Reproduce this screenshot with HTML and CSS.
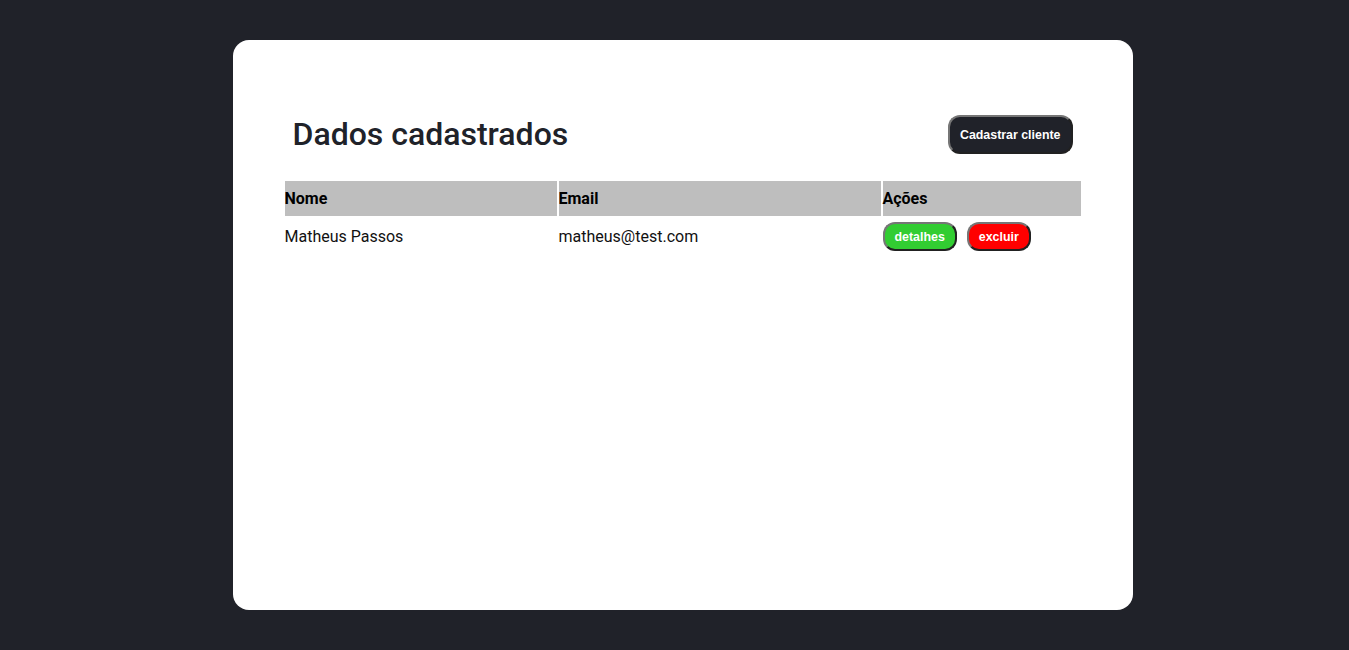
FILE: index.html
```html
<!DOCTYPE html>
<html lang="pt-BR">
<head>
<meta charset="utf-8">
<title>Dados cadastrados</title>
<link rel="stylesheet" href="styles.css">
</head>
<body>
<main class="card">
  <header class="card-header">
    <h1 class="title">Dados cadastrados</h1>
    <button class="btn btn-dark">Cadastrar cliente</button>
  </header>
  <div class="table">
    <div class="th">Nome</div>
    <div class="th">Email</div>
    <div class="th">Ações</div>
    <div class="td">Matheus Passos</div>
    <div class="td">matheus@test.com</div>
    <div class="td actions">
      <button class="btn btn-small btn-green">detalhes</button>
      <button class="btn btn-small btn-red">excluir</button>
    </div>
  </div>
</main>
</body>
</html>
```
FILE: styles.css
```css
html, body {
  margin: 0;
  padding: 0;
  background: #202229;
}
body {
  font-family: Roboto, "Liberation Sans", sans-serif;
  padding: 40px 0 0 16px;
  height: 650px;
  box-sizing: border-box;
}
.card {
  width: 900px;
  height: 570px;
  margin: 0 auto;
  background: #ffffff;
  border-radius: 16px;
  box-sizing: border-box;
  padding: 75px 52px 0;
}
.card-header {
  display: flex;
  align-items: center;
  justify-content: space-between;
  padding: 0 8px;
  height: 39px;
}
.title {
  margin: 0;
  font-size: 32px;
  font-weight: 500;
  color: #202229;
  line-height: 37px;
}
.btn {
  font-family: "Liberation Sans", Arial, sans-serif;
  font-weight: bold;
  color: #ffffff;
  border: 2px outset #767676;
  cursor: pointer;
  box-sizing: border-box;
}
.btn-dark {
  background: #202229;
  font-size: 12.4px;
  height: 39px;
  padding: 0 10px;
  border-radius: 12px;
}
.table {
  margin-top: 27px;
  display: grid;
  grid-template-columns: 272px 322px 198px;
  column-gap: 2px;
  row-gap: 2px;
  color: #000;
  font-size: 16px;
}
.th {
  background: #bebebe;
  font-weight: bold;
  height: 35px;
  display: flex;
  align-items: center;
}
.td {
  height: 37px;
  display: flex;
  align-items: center;
  color: #111;
}
.actions {
  gap: 10px;
}
.btn-small {
  font-size: 12.4px;
  height: 29px;
  padding: 0 10px;
  border-radius: 12px;
}
.btn-green { background: #32cd32; }
.btn-red { background: #ff0000; }
```
